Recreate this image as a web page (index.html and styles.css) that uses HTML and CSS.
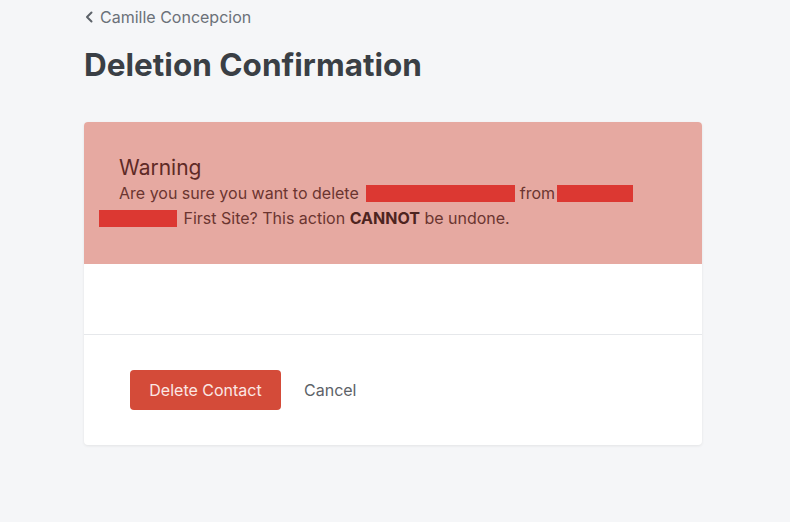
FILE: index.html
```html
<!DOCTYPE html>
<html>
<head>
<meta charset="utf-8">
<link rel="stylesheet" href="styles.css">
</head>
<body>
<div class="page">
  <a class="crumb" href="#">
    <svg class="chev" width="8" height="12" viewBox="0 0 8 12"><path d="M6.5 1.5 2 6l4.5 4.5" fill="none" stroke="currentColor" stroke-width="2" stroke-linecap="round" stroke-linejoin="round"/></svg>
    <span>Camille Concepcion</span>
  </a>
  <h1 class="title">Deletion Confirmation</h1>
  <div class="card">
    <div class="warning">
      <div class="warn-title">Warning</div>
      <p class="warn-text">Are you sure you want to delete <span class="redact r1"></span> from<span class="redact r2"></span><br><span class="redact r3"></span> First Site? This action <strong>CANNOT</strong> be undone.</p>
    </div>
    <div class="spacer"></div>
    <div class="actions">
      <button class="btn-danger">Delete Contact</button>
      <a class="cancel" href="#">Cancel</a>
    </div>
  </div>
</div>
</body>
</html>
```
FILE: styles.css
```css
* { box-sizing: border-box; }
html, body { margin: 0; padding: 0; }
body {
  background: #f5f6f8;
  font-family: Inter, "Noto Sans", "Liberation Sans", sans-serif;
  width: 790px;
  height: 522px;
  overflow: hidden;
}
.page {
  padding: 6px 0 0 84px;
}
.crumb {
  display: flex;
  align-items: center;
  gap: 7px;
  color: #6b7178;
  text-decoration: none;
  font-size: 16px;
  line-height: 20px;
  padding-left: 1px;
  margin-top: 1px;
}
.chev { color: #5d636a; }
.title {
  margin: 18px 0 0 0;
  font-size: 31.5px;
  line-height: 40px;
  font-weight: 700;
  color: #3a3f45;
}
.card {
  margin-top: 37px;
  width: 618px;
  background: #fff;
  border-radius: 4px;
  box-shadow: 0 1px 3px rgba(0,0,0,0.08);
  overflow: hidden;
}
.warning {
  background: #e6a9a1;
  height: 142px;
  padding: 32px 20px 0 35px;
  color: #6b3530;
}
.warn-title {
  font-size: 21px;
  line-height: 27px;
  color: #5e2a26;
}
.warn-text {
  margin: 0;
  font-size: 16px;
  line-height: 25px;
}
.warn-text strong { color: #4e2420; font-weight: 700; }
.redact {
  display: inline-block;
  background: #dc3832;
  height: 17px;
  vertical-align: -3px;
}
.r1 { width: 149px; margin-left: 3px; }
.r2 { width: 76px; margin-left: 2px; }
.r3 { width: 78px; margin-left: -20px; margin-right: 2px; }
.spacer {
  height: 71px;
  border-bottom: 1px solid #e6e8eb;
}
.actions {
  display: flex;
  align-items: center;
  gap: 23px;
  padding: 35px 46px 35px 46px;
}
.btn-danger {
  font-family: inherit;
  background: #d44b39;
  color: #fbe7e4;
  border: none;
  border-radius: 4px;
  font-size: 16px;
  height: 40px;
  width: 151px;
  padding: 0;
}
.cancel {
  color: #5d6268;
  text-decoration: none;
  font-size: 16px;
}
```
